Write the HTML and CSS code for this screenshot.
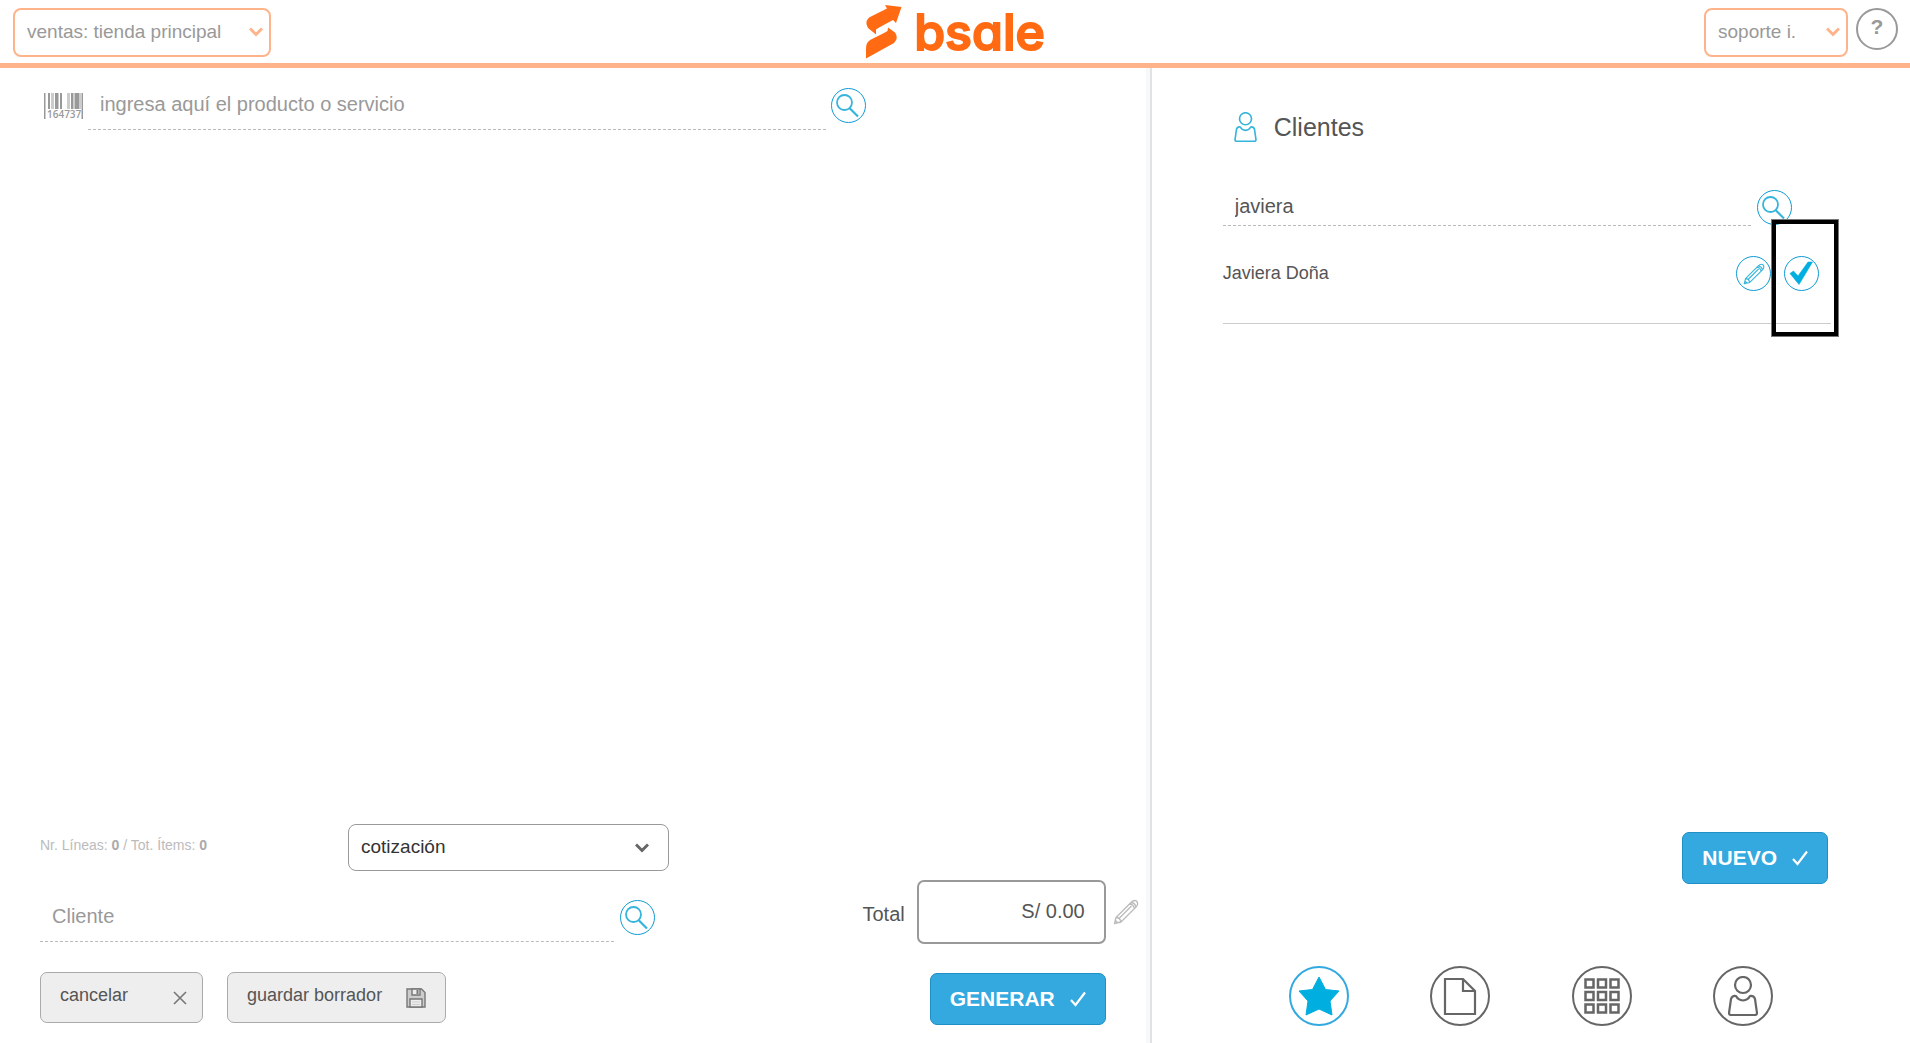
FILE: index.html
```html
<!DOCTYPE html>
<html lang="es">
<head>
    <meta charset="UTF-8">
    <meta name="viewport" content="width=device-width, initial-scale=1.0">
    <title>bsale</title>
    <link rel="stylesheet" href="styles.css">
</head>
<body>
    <svg class="sprite" aria-hidden="true">
        <symbol id="icon-chevron" viewBox="0 0 14 10">
            <path d="M1 1.500 7 7.500l6-6" fill="none" stroke="currentColor" stroke-width="3"/>
        </symbol>
        <symbol id="icon-search" viewBox="0 0 35 35">
            <circle cx="13.500" cy="14.500" r="7.500" fill="none" stroke="currentColor" stroke-width="1.800"/>
            <path d="M18.500 20 27 28.500" fill="none" stroke="currentColor" stroke-width="2.200"/>
        </symbol>
        <symbol id="icon-pencil" viewBox="0 0 26 26">
            <path d="M1.500 24.500 3 18.500 18 3.500q3-3 5.500-1.500 2.500 3-.500 6L8 23zM3 18.500q4 0 5 4.500M16.500 5q4 0 5 5M18.500 3.500q3.500.500 4.500 4.500M6 19.500 18.500 7M1.500 24.500l3-1-2-2z" fill="none" stroke="currentColor" stroke-width="1.300" stroke-linejoin="round"/>
        </symbol>
        <symbol id="icon-check" viewBox="0 0 16 16">
            <path d="M1 9 5.500 14 15 1.500" fill="none" stroke="currentColor" stroke-width="2.200"/>
        </symbol>
        <symbol id="icon-person" viewBox="0 0 30 40">
            <circle cx="15" cy="9" r="8" fill="none" stroke="currentColor" stroke-width="2.200"/>
            <path d="M8 20q-4-.500-5 3L1 37q0 2 2 2h24q2 0 2-2l-2-14q-1-3.500-5-3-2 4-7 4.500Q10 24 8 20z" fill="none" stroke="currentColor" stroke-width="2.200" stroke-linejoin="round"/>
        </symbol>
    </svg>

    <header class="topbar">
        <div class="select-box select-store">
            <select aria-label="Sucursal">
                <option>ventas: tienda principal</option>
            </select>
            <svg class="chevron"><use href="#icon-chevron"/></svg>
        </div>
        <a href="#" class="logo">
            <svg class="logo-mark" viewBox="0 0 36 54">
                <path d="M19 0 35.500 2 30 18 27 15 14 22 10 24.500 10 29.500 2 23Q-2 16 4 12L21 3.500z"/>
                <path d="M22 22.500 29 27.500Q33 33 28 38L0 53.500V43Q0 37 5 34.500L18 28 21.500 26z"/>
            </svg>
            <span class="logo-text">bsale</span>
        </a>
        <div class="topbar-right">
            <div class="select-box select-user">
                <select aria-label="Usuario">
                    <option>soporte i.</option>
                </select>
                <svg class="chevron"><use href="#icon-chevron"/></svg>
            </div>
            <button type="button" class="help">?</button>
        </div>
    </header>

    <div class="content">
        <main class="sale">
            <div class="search-row product-search">
                <svg class="barcode" viewBox="0 0 39 26">
                    <path d="M0 0h1.500v26H0zM37.500 0H39v26h-1.500zM4 0h2v16H4zM11 0h3v16h-3zM16 0h2v16h-2zM27 0h2v16h-2zM31 0h4v16h-4z" fill="#999"/>
                    <path d="M7 0h3v16H7zM14 0h1v16h-1zM23 0h3v16h-3zM29 0h2v16h-2zM35 0h2v16h-2z" fill="#ccc"/>
                    <text x="3" y="25" class="barcode-text">164737</text>
                </svg>
                <input type="text" class="line-input" aria-label="Producto" placeholder="ingresa aquí el producto o servicio">
                <button type="button" class="round" aria-label="Buscar producto"><svg><use href="#icon-search"/></svg></button>
            </div>

            <div class="sale-footer">
                <div class="document">
                    <div class="document-row">
                        <p class="counts">Nr. Líneas: <b>0</b> / Tot. Ítems: <b>0</b></p>
                        <div class="select-box select-document">
                            <select aria-label="Documento">
                                <option>cotización</option>
                            </select>
                            <svg class="chevron"><use href="#icon-chevron"/></svg>
                        </div>
                    </div>
                    <div class="search-row client-search">
                        <input type="text" class="line-input" aria-label="Cliente" placeholder="Cliente">
                        <button type="button" class="round" aria-label="Buscar cliente"><svg><use href="#icon-search"/></svg></button>
                    </div>
                    <div class="actions">
                        <button type="button" class="btn-gray">
                            cancelar
                            <svg class="icon-close" viewBox="0 0 14 14"><path d="M1 1l12 12M13 1 1 13" fill="none" stroke="currentColor" stroke-width="1.600"/></svg>
                        </button>
                        <button type="button" class="btn-gray">
                            guardar borrador
                            <svg class="icon-save" viewBox="0 0 20 20">
                                <path d="M1 1h14.500L19 4.500V19H1z" fill="#ccc" stroke="currentColor" stroke-width="1.400"/>
                                <path d="M6 1h8v6H6zM4 11h12v8H4z" fill="#eee" stroke="currentColor" stroke-width="1.400"/>
                                <path d="M10.500 2h2v4h-2z" fill="currentColor"/>
                                <path d="M6 14h8M6 16.500h8" stroke="#ccc"/>
                            </svg>
                        </button>
                    </div>
                </div>

                <div class="totals">
                    <div class="total-row">
                        <label for="total">Total</label>
                        <input type="text" id="total" value="S/ 0.00">
                        <button type="button" class="edit-total" aria-label="Editar total"><svg><use href="#icon-pencil"/></svg></button>
                    </div>
                    <button type="button" class="btn-blue">GENERAR <svg><use href="#icon-check"/></svg></button>
                </div>
            </div>
        </main>

        <aside class="clients">
            <h2><svg><use href="#icon-person"/></svg>Clientes</h2>
            <div class="search-row">
                <input type="text" class="line-input" aria-label="Buscar" value="javiera">
                <button type="button" class="round" aria-label="Buscar"><svg><use href="#icon-search"/></svg></button>
            </div>
            <div class="client">
                <span class="client-name">Javiera Doña</span>
                <button type="button" class="round" aria-label="Editar"><svg class="icon-edit"><use href="#icon-pencil"/></svg></button>
                <div class="pick">
                    <button type="button" class="round" aria-label="Seleccionar">
                        <svg viewBox="0 0 35 35"><path d="M6 17.500 9.500 15 14 20 24 6H28.500L15 28.500z" fill="#00aee0" stroke="#00aee0" stroke-width=".6" stroke-linejoin="round"/></svg>
                    </button>
                    <div class="highlight"></div>
                </div>
            </div>

            <div class="clients-footer">
                <button type="button" class="btn-blue">NUEVO <svg><use href="#icon-check"/></svg></button>
                <nav class="tabs">
                    <a href="#" class="active" aria-label="Favoritos">
                        <svg viewBox="0 0 60 60"><path d="M30 11l6.500 12.500 13.500 1.500-9 10 2 14-13-6-13 6 2-14-9-10 13.500-1.500z" fill="#00aee0" stroke="#00aee0" stroke-width="1" stroke-linejoin="round"/></svg>
                    </a>
                    <a href="#" aria-label="Documentos">
                        <svg viewBox="0 0 60 60"><path d="M15 13h18l12 12v23H15zM33 13v12h12" fill="none" stroke="currentColor" stroke-width="2.200"/></svg>
                    </a>
                    <a href="#" aria-label="Categorías">
                        <svg viewBox="0 0 60 60"><path d="M13.500 13.500h8v8h-8zM26 13.500h8v8h-8zM38.500 13.500h8v8h-8zM13.500 26h8v8h-8zM26 26h8v8h-8zM38.500 26h8v8h-8zM13.500 38.500h8v8h-8zM26 38.500h8v8h-8zM38.500 38.500h8v8h-8z" fill="none" stroke="currentColor" stroke-width="2.500"/></svg>
                    </a>
                    <a href="#" aria-label="Clientes">
                        <svg class="tab-person"><use href="#icon-person"/></svg>
                    </a>
                </nav>
            </div>
        </aside>
    </div>
</body>
</html>
```
FILE: styles.css
```css
* {
    box-sizing: border-box;
}
body {
    font-family: "Liberation Sans", Arial, sans-serif;
    font-size: 18px;
    color: #555;
    background-color: #fff;
    margin: 0;
    display: flex;
    flex-direction: column;
    min-height: 100vh;
}
button, input, select {
    font-family: inherit;
    font-size: inherit;
    color: inherit;
    margin: 0;
}
button {
    padding: 0;
    cursor: pointer;
}
svg {
    display: block;
    flex-shrink: 0;
}
.sprite {
    display: none;
}

/* Header */
.topbar {
    display: grid;
    grid-template-columns: 1fr auto 1fr;
    align-items: center;
    height: 68px;
    padding: 2px 12px 0 13px;
    border-bottom: 5px solid #ffb38a;
}
.select-box {
    position: relative;
    height: 49px;
}
.select-box select {
    appearance: none;
    width: 100%;
    height: 100%;
    padding: 0 12px 3px;
    border: 2px solid #ffb38a;
    border-radius: 8px;
    background-color: #fff;
    color: #999;
    font-size: 19px;
}
.chevron {
    position: absolute;
    right: 8px;
    top: 19px;
    width: 14px;
    height: 10px;
    color: #ffb38a;
    pointer-events: none;
}
.select-store {
    width: 258px;
}
.select-user {
    width: 144px;
}
.logo {
    display: flex;
    align-items: center;
    gap: 12px;
    margin-bottom: 2px;
    color: #ff6a13;
    text-decoration: none;
}
.logo-mark {
    width: 36px;
    height: 54px;
    fill: currentColor;
}
.logo-text {
    font-family: Inter, sans-serif;
    font-size: 50px;
    font-weight: 500;
    line-height: 54px;
    font-feature-settings: "cv11";
    -webkit-text-stroke: 2px currentColor;
    stroke-linejoin: round;
}
.topbar-right {
    display: flex;
    justify-content: flex-end;
    gap: 8px;
}
.help {
    width: 42px;
    height: 42px;
    padding-bottom: 4px;
    border: 2px solid #999;
    border-radius: 50%;
    background: none;
    color: #999;
    font-size: 21px;
    font-weight: bold;
}

/* Layout */
.content {
    flex: 1;
    display: flex;
}
.sale {
    width: 60.3%;
    display: flex;
    flex-direction: column;
    justify-content: space-between;
    padding: 20px 11px 18px 40px;
    border-right: 2px solid #e0e2e4;
    box-shadow: inset -4px 0 #f7f8f9;
}
.clients {
    flex: 1;
    display: flex;
    flex-direction: column;
    padding: 44px 79px 17px 71px;
}

/* Search fields */
.search-row {
    display: flex;
    align-items: flex-start;
    gap: 6px;
}
.line-input {
    flex: 1;
    min-width: 0;
    height: 42px;
    padding: 0 12px 8px;
    border: none;
    border-bottom: 1px dashed #bbb;
    background: none;
    font-size: 20px;
    outline: none;
}
.line-input::placeholder {
    color: #999;
}
.round {
    display: flex;
    align-items: center;
    justify-content: center;
    flex-shrink: 0;
    width: 35px;
    height: 35px;
    border: 1px solid #0e9bd3;
    border-radius: 50%;
    background: none;
    color: #35b4dc;
}
.round svg {
    width: 35px;
    height: 35px;
}
.round .icon-edit {
    width: 22px;
    height: 22px;
}
.product-search {
    gap: 5px;
    padding: 0 273px 0 4px;
}
.barcode {
    width: 39px;
    height: 26px;
    margin-top: 5px;
    overflow: visible;
}
.barcode-text {
    font-family: "Open Sans", sans-serif;
    font-size: 10px;
    font-weight: 600;
    fill: #999;
}

/* Sale footer */
.sale-footer {
    display: flex;
    justify-content: space-between;
    align-items: flex-end;
}
.document {
    width: 629px;
    margin-bottom: 2px;
}
.document-row {
    display: flex;
    justify-content: space-between;
    align-items: flex-start;
    margin-bottom: 29px;
}
.counts {
    margin: 13px 0;
    font-size: 14px;
    color: #bbb;
}
.counts b {
    color: #aaa;
}
.select-document {
    width: 321px;
    height: 47px;
}
.select-document select {
    border: 1px solid #999;
    color: #333;
}
.select-document .chevron {
    right: 20px;
    color: #666;
}
.client-search {
    padding-right: 14px;
    margin-bottom: 30px;
}
.actions {
    display: flex;
    gap: 24px;
}
.btn-gray {
    display: flex;
    align-items: center;
    height: 51px;
    padding: 0 19px 5px;
    border: 1px solid #aaa;
    border-radius: 7px;
    background-color: #eee;
    color: #555;
}
.icon-close {
    width: 14px;
    height: 14px;
    margin: 6px -4px 0 45px;
    color: #777;
}
.icon-save {
    width: 20px;
    height: 20px;
    margin: 6px 0 0 24px;
    color: #777;
}
.totals {
    display: flex;
    flex-direction: column;
    align-items: flex-end;
    gap: 29px;
}
.total-row {
    display: flex;
    align-items: center;
}
.total-row label {
    margin: 5px 12px 0 0;
    font-size: 20px;
}
.total-row input {
    width: 189px;
    height: 64px;
    padding: 0 19px 2px;
    border: 2px solid #999;
    border-radius: 7px;
    font-size: 20px;
    text-align: right;
}
.edit-total {
    margin-left: 7px;
    border: none;
    background: none;
    color: #bbb;
}
.edit-total svg {
    width: 26px;
    height: 26px;
}
.btn-blue {
    display: flex;
    align-items: center;
    gap: 15px;
    height: 52px;
    padding: 0 19px;
    border: 1px solid #1f8fc4;
    border-radius: 7px;
    background-color: #33a9df;
    color: #fff;
    font-size: 21px;
    font-weight: bold;
}
.btn-blue svg {
    width: 16px;
    height: 16px;
}
.totals .btn-blue {
    margin-right: 33px;
}

/* Clients panel */
.clients h2 {
    display: flex;
    align-items: center;
    gap: 16px;
    margin: 0 0 41px 10px;
    font-size: 25px;
    line-height: 30px;
    font-weight: normal;
}
.clients h2 svg {
    width: 25px;
    height: 30px;
    color: #35b4dc;
}
.clients .search-row {
    padding: 7px 39px 0 0;
}
.clients .search-row .line-input {
    height: 36px;
    padding-bottom: 3px;
    margin-bottom: 30px;
}
.client {
    display: flex;
    align-items: flex-start;
    gap: 13px;
    height: 68px;
    padding-right: 12px;
    border-bottom: 1px solid #ccc;
}
.client-name {
    flex: 1;
    line-height: 35px;
}
.pick {
    position: relative;
}
/* frame over the select button */
.highlight {
    position: absolute;
    top: -37px;
    left: -13px;
    width: 68px;
    height: 118px;
    border: 5px solid #000;
    outline: 1px solid #777;
    outline-offset: -1px;
    pointer-events: none;
}
.clients-footer {
    display: flex;
    flex-direction: column;
    align-items: flex-end;
    gap: 82px;
    margin-top: auto;
}
.clients-footer .btn-blue {
    margin-right: 3px;
}
.tabs {
    display: flex;
    justify-content: space-around;
    width: 100%;
    padding: 0 17px 0 25px;
}
.tabs a {
    display: flex;
    align-items: center;
    justify-content: center;
    width: 60px;
    height: 60px;
    border: 2px solid #666;
    border-radius: 50%;
    color: #666;
}
.tabs .active {
    border-color: #33a9df;
}
.tabs svg {
    width: 60px;
    height: 60px;
}
.tabs .tab-person {
    width: 30px;
    height: 40px;
}
```
